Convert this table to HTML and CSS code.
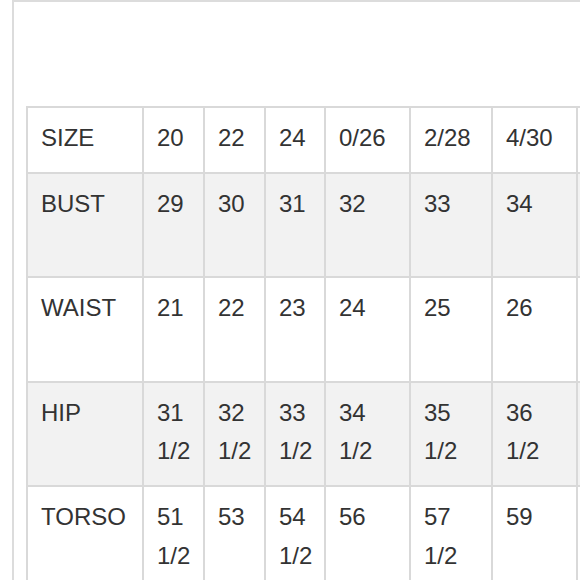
FILE: index.html
```html
<!DOCTYPE html>
<html>
<head>
<meta charset="utf-8">
<link rel="stylesheet" href="styles.css">
</head>
<body>
<div class="panel">
  <table class="sizes">
    <colgroup>
      <col class="c-label">
      <col class="c-narrow">
      <col class="c-narrow">
      <col class="c-narrow2">
      <col class="c-wide">
      <col class="c-mid">
      <col class="c-wide">
      <col class="c-wide">
    </colgroup>
    <tbody>
      <tr class="head">
        <td>SIZE</td><td>20</td><td>22</td><td>24</td><td>0/26</td><td>2/28</td><td>4/30</td><td></td>
      </tr>
      <tr class="alt">
        <td>BUST</td><td>29</td><td>30</td><td>31</td><td>32</td><td>33</td><td>34</td><td></td>
      </tr>
      <tr>
        <td>WAIST</td><td>21</td><td>22</td><td>23</td><td>24</td><td>25</td><td>26</td><td></td>
      </tr>
      <tr class="alt">
        <td>HIP</td><td>31 1/2</td><td>32 1/2</td><td>33 1/2</td><td>34 1/2</td><td>35 1/2</td><td>36 1/2</td><td></td>
      </tr>
      <tr>
        <td>TORSO</td><td>51 1/2</td><td>53</td><td>54 1/2</td><td>56</td><td>57 1/2</td><td>59</td><td></td>
      </tr>
    </tbody>
  </table>
</div>
</body>
</html>
```

FILE: styles.css
```css
html, body {
  margin: 0;
  padding: 0;
  overflow: hidden;
  background: #fff;
}

.panel {
  margin: 0 0 0 12px;
  border: 2px solid #dcdcdc;
  border-right: none;
  padding: 104px 0 0 12px;
  width: 700px;
}

.sizes {
  border-collapse: collapse;
  table-layout: fixed;
  width: 636px;
  font-family: "Liberation Sans", Arial, Helvetica, sans-serif;
  font-size: 24px;
  line-height: 38.4px;
  color: #333;
}

.c-label { width: 116px; }
.c-narrow { width: 61px; }
.c-narrow2 { width: 60px; }
.c-wide { width: 85px; }
.c-mid { width: 82px; }

.sizes td {
  border: 2px solid #d9d9d9;
  padding: 11px 11px 14.6px 13px;
  vertical-align: top;
  text-align: left;
}

.sizes tr { height: 104.4px; }
.sizes tr.head { height: 66px; }

.sizes tr.alt td { background: #f2f2f2; }
```
